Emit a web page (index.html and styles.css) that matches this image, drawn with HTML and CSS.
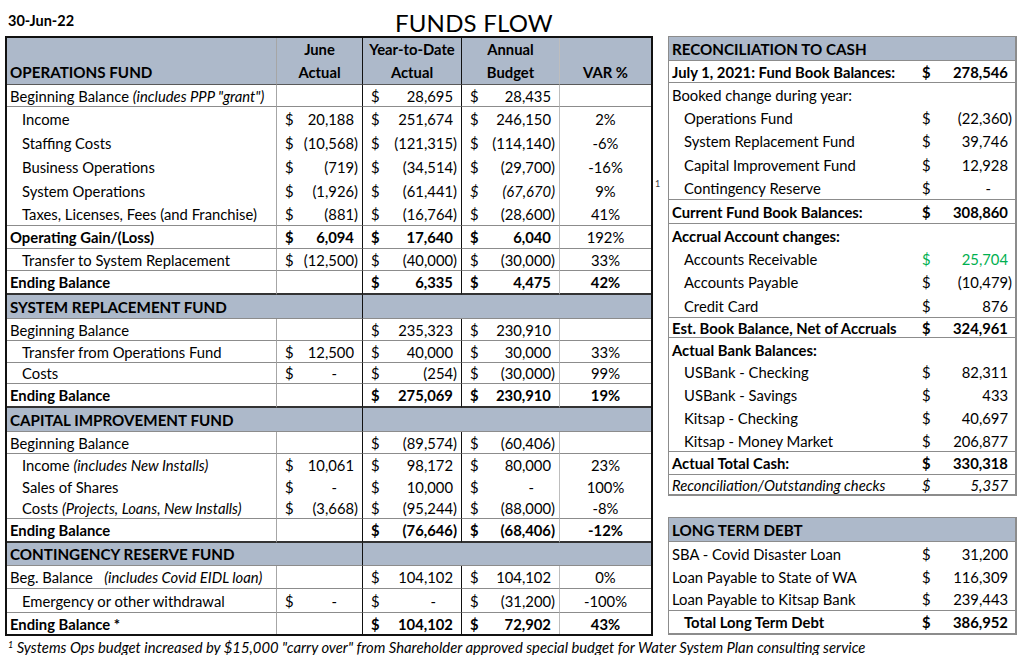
FILE: index.html
```html
<!DOCTYPE html>
<html>
<head>
<meta charset="utf-8">
<link rel="stylesheet" href="styles.css">
</head>
<body>
<div class="page">
  <div class="topbar">
    <div class="date">30-Jun-22</div>
    <div class="title">FUNDS FLOW</div>
  </div>
  <div class="main">
    <table class="ff">
      <colgroup><col class="w1"><col class="w2"><col class="w3"><col class="w4"><col class="w5"></colgroup>
      <tr class="h45 hdr">
        <th class="c1 fund lbd">OPERATIONS FUND</th>
        <th class="c2 lbd">June<br>Actual</th>
        <th class="c3 lbd">Year-to-Date<br>Actual</th>
        <th class="c4 lbd">Annual<br>Budget</th>
        <th class="c5 lbd bot">VAR %</th>
      </tr>
      <tr class="h22 lb">
        <td class="c1 lab">Beginning Balance <em>(includes PPP "grant")</em></td>
        <td class="c2"></td>
        <td class="c3 m p"><span class="d">$</span>28,695</td>
        <td class="c4 m p"><span class="d">$</span>28,435</td>
        <td class="c5"></td>
      </tr>
      <tr class="h24">
        <td class="c1 lab in">Income</td>
        <td class="c2 m p"><span class="d">$</span>20,188</td>
        <td class="c3 m p"><span class="d">$</span>251,674</td>
        <td class="c4 m p"><span class="d">$</span>246,150</td>
        <td class="c5 pc">2%</td>
      </tr>
      <tr class="h24">
        <td class="c1 lab in">Staffing Costs</td>
        <td class="c2 m"><span class="d">$</span>(10,568)</td>
        <td class="c3 m"><span class="d">$</span>(121,315)</td>
        <td class="c4 m"><span class="d">$</span>(114,140)</td>
        <td class="c5 pc">-6%</td>
      </tr>
      <tr class="h24">
        <td class="c1 lab in">Business Operations</td>
        <td class="c2 m"><span class="d">$</span>(719)</td>
        <td class="c3 m"><span class="d">$</span>(34,514)</td>
        <td class="c4 m"><span class="d">$</span>(29,700)</td>
        <td class="c5 pc">-16%</td>
      </tr>
      <tr class="h23">
        <td class="c1 lab in">System Operations</td>
        <td class="c2 m"><span class="d">$</span>(1,926)</td>
        <td class="c3 m"><span class="d">$</span>(61,441)</td>
        <td class="c4 m it"><span class="d">$</span>(67,670)</td>
        <td class="c5 pc">9%</td>
      </tr>
      <tr class="h24 lb">
        <td class="c1 lab in">Taxes, Licenses, Fees (and Franchise)</td>
        <td class="c2 m"><span class="d">$</span>(881)</td>
        <td class="c3 m"><span class="d">$</span>(16,764)</td>
        <td class="c4 m"><span class="d">$</span>(28,600)</td>
        <td class="c5 pc">41%</td>
      </tr>
      <tr class="h23 lb">
        <td class="c1 lab bold">Operating Gain/(Loss)</td>
        <td class="c2 m p bold"><span class="d">$</span>6,094</td>
        <td class="c3 m p bold"><span class="d">$</span>17,640</td>
        <td class="c4 m p bold"><span class="d">$</span>6,040</td>
        <td class="c5 pc">192%</td>
      </tr>
      <tr class="h22 lb">
        <td class="c1 lab in">Transfer to System Replacement</td>
        <td class="c2 m"><span class="d">$</span>(12,500)</td>
        <td class="c3 m"><span class="d">$</span>(40,000)</td>
        <td class="c4 m"><span class="d">$</span>(30,000)</td>
        <td class="c5 pc">33%</td>
      </tr>
      <tr class="h24 tb">
        <td class="c1 lab bold">Ending Balance</td>
        <td class="c2"></td>
        <td class="c3 m p bold"><span class="d">$</span>6,335</td>
        <td class="c4 m p bold"><span class="d">$</span>4,475</td>
        <td class="c5 pc bold">42%</td>
      </tr>
      <tr class="h24 lb sec">
        <td class="c2 lab fund" colspan="2">SYSTEM REPLACEMENT FUND</td>
        <td class="c5" colspan="3"></td>
      </tr>
      <tr class="h22 lb">
        <td class="c1 lab">Beginning Balance</td>
        <td class="c2"></td>
        <td class="c3 m p"><span class="d">$</span>235,323</td>
        <td class="c4 m p"><span class="d">$</span>230,910</td>
        <td class="c5"></td>
      </tr>
      <tr class="h22 lb">
        <td class="c1 lab in">Transfer from Operations Fund</td>
        <td class="c2 m p"><span class="d">$</span>12,500</td>
        <td class="c3 m p"><span class="d">$</span>40,000</td>
        <td class="c4 m p"><span class="d">$</span>30,000</td>
        <td class="c5 pc">33%</td>
      </tr>
      <tr class="h21 lb">
        <td class="c1 lab in">Costs</td>
        <td class="c2 m z"><span class="d">$</span>-</td>
        <td class="c3 m"><span class="d">$</span>(254)</td>
        <td class="c4 m"><span class="d">$</span>(30,000)</td>
        <td class="c5 pc">99%</td>
      </tr>
      <tr class="h24 tb">
        <td class="c1 lab bold">Ending Balance</td>
        <td class="c2"></td>
        <td class="c3 m p bold"><span class="d">$</span>275,069</td>
        <td class="c4 m p bold"><span class="d">$</span>230,910</td>
        <td class="c5 pc bold">19%</td>
      </tr>
      <tr class="h24 lb sec">
        <td class="c2 lab fund" colspan="2">CAPITAL IMPROVEMENT FUND</td>
        <td class="c5" colspan="3"></td>
      </tr>
      <tr class="h22 lb">
        <td class="c1 lab">Beginning Balance</td>
        <td class="c2"></td>
        <td class="c3 m"><span class="d">$</span>(89,574)</td>
        <td class="c4 m"><span class="d">$</span>(60,406)</td>
        <td class="c5"></td>
      </tr>
      <tr class="h22">
        <td class="c1 lab in">Income <em>(includes New Installs)</em></td>
        <td class="c2 m p"><span class="d">$</span>10,061</td>
        <td class="c3 m p"><span class="d">$</span>98,172</td>
        <td class="c4 m p"><span class="d">$</span>80,000</td>
        <td class="c5 pc">23%</td>
      </tr>
      <tr class="h22">
        <td class="c1 lab in">Sales of Shares</td>
        <td class="c2 m z"><span class="d">$</span>-</td>
        <td class="c3 m p"><span class="d">$</span>10,000</td>
        <td class="c4 m z"><span class="d">$</span>-</td>
        <td class="c5 pc">100%</td>
      </tr>
      <tr class="h21 lb">
        <td class="c1 lab in">Costs <em>(Projects, Loans, New Installs)</em></td>
        <td class="c2 m"><span class="d">$</span>(3,668)</td>
        <td class="c3 m"><span class="d">$</span>(95,244)</td>
        <td class="c4 m"><span class="d">$</span>(88,000)</td>
        <td class="c5 pc">-8%</td>
      </tr>
      <tr class="h24 tb">
        <td class="c1 lab bold">Ending Balance</td>
        <td class="c2"></td>
        <td class="c3 m bold"><span class="d">$</span>(76,646)</td>
        <td class="c4 m bold"><span class="d">$</span>(68,406)</td>
        <td class="c5 pc bold">-12%</td>
      </tr>
      <tr class="h23 lb sec">
        <td class="c2 lab fund" colspan="2">CONTINGENCY RESERVE FUND</td>
        <td class="c5" colspan="3"></td>
      </tr>
      <tr class="h23 lb">
        <td class="c1 lab">Beg. Balance &nbsp; <em>(includes Covid EIDL loan)</em></td>
        <td class="c2"></td>
        <td class="c3 m p"><span class="d">$</span>104,102</td>
        <td class="c4 m p"><span class="d">$</span>104,102</td>
        <td class="c5 pc">0%</td>
      </tr>
      <tr class="h24 lb">
        <td class="c1 lab in">Emergency or other withdrawal</td>
        <td class="c2 m z"><span class="d">$</span>-</td>
        <td class="c3 m z"><span class="d">$</span>-</td>
        <td class="c4 m"><span class="d">$</span>(31,200)</td>
        <td class="c5 pc">-100%</td>
      </tr>
      <tr class="h21">
        <td class="c1 lab bold">Ending Balance *</td>
        <td class="c2"></td>
        <td class="c3 m p bold"><span class="d">$</span>104,102</td>
        <td class="c4 m p bold"><span class="d">$</span>72,902</td>
        <td class="c5 pc bold">43%</td>
      </tr>
    </table>

    <div class="gapcol"><sup class="mark">1</sup></div>

    <div class="rightcol">
      <table class="rt">
        <colgroup><col class="rl"><col class="rm"></colgroup>
        <tr class="h24 rh">
          <td class="lab fund" colspan="2">RECONCILIATION TO CASH</td>
        </tr>
        <tr class="h22 lb">
          <td class="lab bold">July 1, 2021: Fund Book Balances:</td>
          <td class="m p bold"><span class="d">$</span>278,546</td>
        </tr>
        <tr class="h23"><td class="lab">Booked change during year:</td><td></td></tr>
        <tr class="h23"><td class="lab in">Operations Fund</td><td class="m"><span class="d">$</span>(22,360)</td></tr>
        <tr class="h24"><td class="lab in">System Replacement Fund</td><td class="m p"><span class="d">$</span>39,746</td></tr>
        <tr class="h24"><td class="lab in">Capital Improvement Fund</td><td class="m p"><span class="d">$</span>12,928</td></tr>
        <tr class="h23 lb"><td class="lab in">Contingency Reserve</td><td class="m z"><span class="d">$</span>-</td></tr>
        <tr class="h24 lb">
          <td class="lab bold">Current Fund Book Balances:</td>
          <td class="m p bold"><span class="d">$</span>308,860</td>
        </tr>
        <tr class="h23"><td class="lab bold">Accrual Account changes:</td><td></td></tr>
        <tr class="h23 green"><td class="lab in">Accounts Receivable</td><td class="m p"><span class="d">$</span>25,704</td></tr>
        <tr class="h24"><td class="lab in">Accounts Payable</td><td class="m"><span class="d">$</span>(10,479)</td></tr>
        <tr class="h24 lb"><td class="lab in">Credit Card</td><td class="m p"><span class="d">$</span>876</td></tr>
        <tr class="h20 lb">
          <td class="lab bold">Est. Book Balance, Net of Accruals</td>
          <td class="m p bold"><span class="d">$</span>324,961</td>
        </tr>
        <tr class="h23"><td class="lab bold">Actual Bank Balances:</td><td></td></tr>
        <tr class="h22"><td class="lab in">USBank - Checking</td><td class="m p"><span class="d">$</span>82,311</td></tr>
        <tr class="h23"><td class="lab in">USBank - Savings</td><td class="m p"><span class="d">$</span>433</td></tr>
        <tr class="h24"><td class="lab in">Kitsap - Checking</td><td class="m p"><span class="d">$</span>40,697</td></tr>
        <tr class="h22 lb"><td class="lab in">Kitsap - Money Market</td><td class="m p"><span class="d">$</span>206,877</td></tr>
        <tr class="h23 lb">
          <td class="lab bold">Actual Total Cash:</td>
          <td class="m p bold"><span class="d">$</span>330,318</td>
        </tr>
        <tr class="h19 it">
          <td class="lab">Reconciliation/Outstanding checks</td>
          <td class="m p"><span class="d">$</span>5,357</td>
        </tr>
      </table>

      <table class="rt ltd">
        <colgroup><col class="rl"><col class="rm"></colgroup>
        <tr class="h24 rh">
          <td class="lab fund" colspan="2">LONG TERM DEBT</td>
        </tr>
        <tr class="h23"><td class="lab">SBA - Covid Disaster Loan</td><td class="m p"><span class="d">$</span>31,200</td></tr>
        <tr class="h23"><td class="lab">Loan Payable to State of WA</td><td class="m p"><span class="d">$</span>116,309</td></tr>
        <tr class="h23 lb"><td class="lab">Loan Payable to Kitsap Bank</td><td class="m p"><span class="d">$</span>239,443</td></tr>
        <tr class="h22">
          <td class="lab bold in">Total Long Term Debt</td>
          <td class="m p bold"><span class="d">$</span>386,952</td>
        </tr>
      </table>
    </div>
  </div>
  <div class="foot"><sup>1</sup> Systems Ops budget increased by $15,000 "carry over" from Shareholder approved special budget for Water System Plan consulting service</div>
</div>
</body>
</html>
```

FILE: styles.css
```css
* { box-sizing: border-box; }
html, body { margin: 0; padding: 0; background: #fff; }
body {
  font-family: Lato, "Open Sans", sans-serif;
  font-size: 14.8px;
  color: #000;
}
.page { width: 1024px; height: 655px; padding-left: 5px; overflow: hidden; }

.topbar { height: 36px; display: flex; align-items: center; }
.date { width: 390px; padding-left: 3px; font-weight: bold; font-size: 14.5px; padding-top: 4px; }
.title { font-size: 24px; letter-spacing: 0.2px; padding-top: 8px; }

.main { display: flex; align-items: flex-start; }

table { border-spacing: 0; table-layout: fixed; }
td, th { padding: 0; white-space: nowrap; vertical-align: middle; font-weight: normal; }

.ff { width: 648px; border: 2px solid #111; }
.w1 { width: 270px; }
.w2 { width: 86px; }
.w3 { width: 99px; }
.w4 { width: 98px; }
.w5 { width: 91px; }

.c1 { border-right: 1px solid #a6a6a6; }
.c2 { border-right: 1px solid #111; }
.c3 { border-right: 1px solid #111; }
.c4 { border-right: 1px solid #bdbdbd; }

.h19 { height: 19px; }
.h20 { height: 20px; }
.h21 { height: 21px; }
.h22 { height: 22px; }
.h23 { height: 23px; }
.h24 { height: 24px; }
.h45 { height: 45px; }

.hdr th { background: #adb9ca; font-weight: bold; text-align: center; line-height: 23px; }
.hdr .lbd { border-bottom: 1px solid #5a5a5a; }
.hdr .fund { text-align: left; vertical-align: bottom; }
.hdr .bot { vertical-align: bottom; }

.sec td { background: #adb9ca; }
.fund { font-weight: bold; font-size: 15.2px; padding-left: 3px; }

.lb td { border-bottom: 1px solid #8c8c8c; }
.tb td { border-bottom: 2px solid #333; }

.lab { padding-left: 3px; text-align: left; }
.lab.in { padding-left: 15px; }
.bold { font-weight: bold; }
em, .it { font-style: italic; }

.m { text-align: right; padding: 0 4px 0 8px; }
.m .d { float: left; }
.m.p::after { content: ")"; visibility: hidden; }
.m.z::after { content: "00)"; visibility: hidden; }
.pc { text-align: center; }

.gapcol { width: 15px; padding-top: 142px; }
.mark { font-size: 9px; color: #444; padding-left: 2px; vertical-align: top; }

.rightcol { width: 349px; display: flex; flex-direction: column; gap: 21px; }
.rt { width: 349px; border: 1px solid #8c8c8c; border-right-width: 2px; border-bottom-width: 2px; }
.rl { width: 244px; }
.rm { width: 102px; }
.rt .m { padding: 0 3px 0 9px; }
.rh td { background: #adb9ca; border-bottom: 1px solid #8c8c8c; }
.green td { color: #00b050; }
.green .lab { color: #000; }

.foot { font-style: italic; font-size: 14.8px; padding-left: 3px; margin-top: 2px; }
.foot sup { font-size: 9px; vertical-align: 5px; }
```
